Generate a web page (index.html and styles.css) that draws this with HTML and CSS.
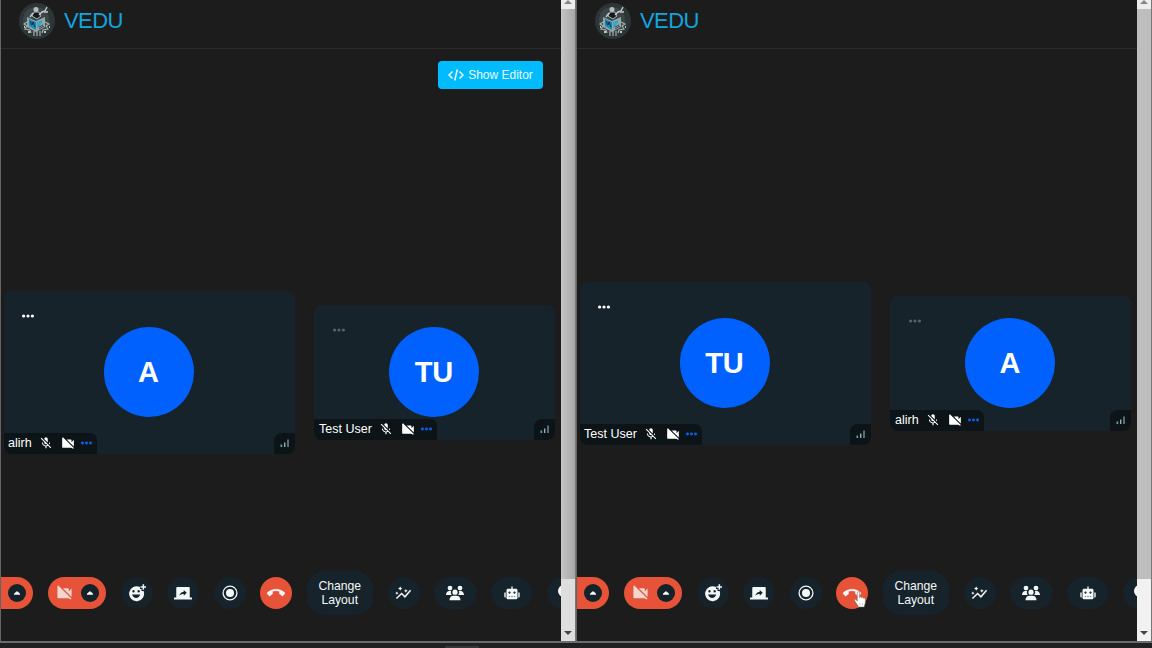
FILE: index.html
```
<!DOCTYPE html>
<html lang="en">
<head>
<meta charset="utf-8">
<title>VEDU</title>
<link rel="stylesheet" href="styles.css">
</head>
<body>
<svg class="defs" width="0" height="0">
  <symbol id="logo" viewBox="0 0 36 36">
    <circle cx="18" cy="18" r="18" fill="#2d3538"/>
    <circle cx="17" cy="17" r="13" fill="#3b4548"/>
    <path d="M8 14l9 4 9-4v10l-9 5-9-5z" fill="#98a3a5"/>
    <path d="M10 16l7 3v8l-7-4z" fill="#1688b4"/>
    <path d="M18 19l5-2v3l-5 6z" fill="#2fa9d2"/>
    <path d="M11 18l2 4 1-3 2 5" stroke="#123443" stroke-width="1" fill="none"/>
    <path d="M20 24l4-2m-4 4l5-3" stroke="#394446" stroke-width="1"/>
    <circle cx="17" cy="6.500" r="2.500" fill="#b6bec0"/>
    <path d="M13 13l2-4h5l2 4-4 3z" fill="#151a1c" stroke="#aab4b6"/>
    <path d="M20 12l3-3 3-1 2-4m-3 5l4 0M14 10l-3 4" stroke="#c0c7c8" stroke-width="1.500" fill="none"/>
    <path d="M8 19l-3 2 3 2-2 3 5 1 1 3m14-11l4 2-3 2 2 3-5 1-1 3M15 28v5m3-5v5m3-5v5" stroke="#a5b0b2" stroke-width="1.200" fill="none"/>
    <path d="M5 24h1m24 0h1M9 29h2m14 0h2" stroke="#c0c8ca" stroke-width="2"/>
  </symbol>
  <symbol id="code" viewBox="0 0 16 12">
    <path d="M4.500 2.500L1 6l3.500 3.500M11.500 2.500L15 6l-3.500 3.500M9.300.5L6.700 11.500" fill="none" stroke="currentColor" stroke-width="1.500"/>
  </symbol>
  <symbol id="dots" viewBox="0 0 12 4">
    <circle cx="1.600" cy="2" r="1.600"/><circle cx="6" cy="2" r="1.600"/><circle cx="10.400" cy="2" r="1.600"/>
  </symbol>
  <symbol id="mic-off" viewBox="0 0 24 24">
    <path d="M19 11h-1.700c0 .74-.16 1.430-.43 2.050l1.230 1.230c.56-.98.900-2.090.900-3.280zm-4.020.17c0-.06.020-.11.020-.17V5c0-1.660-1.340-3-3-3S9 3.340 9 5v.18l5.980 5.990zM4.270 3L3 4.270l6.010 6.010V11c0 1.660 1.330 3 2.990 3 .22 0 .44-.03.650-.08l1.660 1.660c-.71.330-1.500.520-2.310.520-2.760 0-5.300-2.100-5.300-5.100H5c0 3.410 2.720 6.230 6 6.720V21h2v-3.280c.91-.13 1.770-.45 2.540-.9L19.730 21 21 19.730 4.270 3z"/>
  </symbol>
  <symbol id="cam-off" viewBox="0 0 24 24">
    <path d="M22 6.500l-4 4V7c0-.55-.45-1-1-1H9.820L22 18.180V6.500zM3.270 2L2 3.270V19c0 .55.45 1 1 1h14.500L20.730 22 22 20.730 3.270 2z"/>
  </symbol>
  <symbol id="bars" viewBox="0 0 10 9">
    <path d="M.5 5.500h1.700V8H.5z" fill="#58a4b5"/><path d="M4 3.500h1.400V8H4z" fill="#8faeb5"/><path d="M7.300.5h1.400V8H7.300z" fill="#7d9298"/>
  </symbol>
  <symbol id="caret" viewBox="0 0 18 18"><path d="M6 10.700v-1L8.300 7.500h1.400L12 9.700v1z"/></symbol>
  <symbol id="emoji" viewBox="0 0 18 18">
    <path fill-rule="evenodd" d="M12 3A7.500 7.500 0 1 0 15.600 7H13.500V5H12zM5.500 6.100a1.200 1.200 0 1 1 0 2.400 1.200 1.200 0 0 1 0-2.400zm5.200 0a1.200 1.200 0 1 1 0 2.400 1.200 1.200 0 0 1 0-2.400zM4 10.500h8.300c-.6 2-2.200 3.400-4.150 3.400S4.600 12.500 4 10.500z"/>
    <path d="M14.600.3h1.500v2h2v1.500h-2v2h-1.500v-2h-2V2.300h2z"/>
  </symbol>
  <symbol id="share" viewBox="0 0 24 24">
    <path fill-rule="evenodd" d="M3 5.500C3 4.700 3.700 4 4.500 4h15c.8 0 1.500.7 1.500 1.500V18h3v2.500H0V18h3zM13 8v2.200c-3.900.5-5.400 3.200-6 5.800 1.400-1.900 3.200-2.700 6-2.700v2.200l4-3.750z"/>
  </symbol>
  <symbol id="record" viewBox="0 0 16 16">
    <circle cx="8" cy="8" r="6.900" fill="none" stroke="currentColor" stroke-width="1.300"/><circle cx="8" cy="8" r="4"/>
  </symbol>
  <symbol id="hangup" viewBox="0 0 24 24">
    <path d="M12 9c-1.600 0-3.150.25-4.600.72v3.100c0 .39-.23.740-.56.900-.98.490-1.870 1.120-2.660 1.850-.18.180-.43.280-.7.280-.28 0-.53-.11-.71-.29L.29 13.080c-.18-.17-.29-.42-.29-.7s.11-.53.290-.71C3.340 8.780 7.460 7 12 7s8.660 1.780 11.710 4.670c.18.180.29.430.29.710s-.11.530-.29.710l-2.480 2.480c-.18.180-.43.290-.71.290-.27 0-.52-.11-.7-.28-.79-.74-1.690-1.360-2.670-1.850-.33-.16-.56-.5-.56-.9v-3.100C15.150 9.250 13.600 9 12 9z" stroke="currentColor" stroke-width=".6"/>
  </symbol>
  <symbol id="stats" viewBox="0 0 18 16">
    <path d="M1.500 13.800L7 8.500l3.500 3.500 6-7" fill="none" stroke="currentColor" stroke-width="1.600"/>
    <path d="M5.500 1l.8 1.500 1.500.8-1.500.8-.8 1.500-.8-1.500-1.500-.8 1.500-.8zM11.500 3.700l.7 1.300 1.300.7-1.300.7-.7 1.300-.7-1.300-1.300-.7 1.300-.7zM2 6.500l.6 1.100 1.100.6-1.100.6L2 9.900l-.6-1.100-1.100-.6 1.100-.6z"/>
  </symbol>
  <symbol id="people" viewBox="0 0 18 15">
    <circle cx="4" cy="2.600" r="2.400"/><circle cx="14" cy="2.600" r="2.400"/>
    <path d="M0 9.500c0-2.300 1.300-4 3.200-4h1.900c-.6 1.500-.2 2.900.7 4zM18 9.500c0-2.300-1.300-4-3.200-4h-1.900c.6 1.500.2 2.900-.7 4z"/>
    <circle cx="9" cy="6.700" r="2.600"/><path d="M3.500 14.700c0-2.700 1.500-4.500 3.800-4.500h3.400c2.300 0 3.800 1.800 3.800 4.500z"/>
  </symbol>
  <symbol id="bot" viewBox="0 0 16 13">
    <path fill-rule="evenodd" d="M7.300 0h1.400v2.300H12c.9 0 1.500.6 1.500 1.500v7.400c0 .8-.6 1.500-1.500 1.500H4c-.9 0-1.500-.7-1.500-1.500V3.800c0-.9.600-1.500 1.500-1.500h3.300zM5.500 5a1.100 1.100 0 1 0 0 2.200 1.100 1.100 0 0 0 0-2.200zm5 0a1.100 1.100 0 1 0 0 2.200 1.100 1.100 0 0 0 0-2.200zM4.700 9.600v.5h1.500v-.5zm2.550 0v.5h1.500v-.5zm2.550 0v.5h1.500v-.5z"/>
    <path d="M.3 6h1.400v5H1.200C.7 11 .3 10.600.3 10zM14.300 6h1.400v4c0 .6-.4 1-.9 1h-.5z"/>
  </symbol>
  <symbol id="chat" viewBox="0 0 16 16"><circle cx="6" cy="6" r="6"/><path d="M3 9h7v5H5z"/></symbol>
</svg>

<main class="desktop">
  <section class="window">
    <div class="page">
      <header class="header"><svg class="logo"><use href="#logo"/></svg><span class="brand">VEDU</span></header>
      <div class="toolbar"><button class="editor"><svg class="code"><use href="#code"/></svg><span>Show Editor</span></button></div>
      <div class="stage">
        <article class="tile speaker">
          <svg class="menu"><use href="#dots"/></svg>
          <div class="avatar">A</div>
          <div class="footer"><div class="name"><span>alirh</span><svg class="small"><use href="#mic-off"/></svg><svg class="small"><use href="#cam-off"/></svg><svg class="more"><use href="#dots"/></svg></div><div class="signal"><svg class="bars"><use href="#bars"/></svg></div></div>
        </article>
        <article class="tile">
          <svg class="menu dim"><use href="#dots"/></svg>
          <div class="avatar">TU</div>
          <div class="footer"><div class="name"><span>Test User</span><svg class="small"><use href="#mic-off"/></svg><svg class="small"><use href="#cam-off"/></svg><svg class="more"><use href="#dots"/></svg></div><div class="signal"><svg class="bars"><use href="#bars"/></svg></div></div>
        </article>
      </div>
      <nav class="controls">
        <div class="pill first"><svg class="caret"><use href="#caret"/></svg></div>
        <div class="pill"><svg class="cam"><use href="#cam-off"/></svg><svg class="caret"><use href="#caret"/></svg></div>
        <div class="btn"><svg class="i18"><use href="#emoji"/></svg></div>
        <div class="btn"><svg class="i18"><use href="#share"/></svg></div>
        <div class="btn"><svg class="i16"><use href="#record"/></svg></div>
        <div class="btn end"><svg class="i18"><use href="#hangup"/></svg></div>
        <div class="btn layout">Change<br>Layout</div>
        <div class="btn"><svg class="i17"><use href="#stats"/></svg></div>
        <div class="btn wide"><svg class="i18"><use href="#people"/></svg></div>
        <div class="btn medium"><svg class="i16"><use href="#bot"/></svg></div>
        <div class="btn wide chat"><svg class="i16"><use href="#chat"/></svg></div>
      </nav>
    </div>
    <div class="scrollbar"><div class="arrow up"></div><div class="thumb"></div><div class="arrow down"></div></div>
  </section>

  <section class="window second">
    <div class="page">
      <header class="header"><svg class="logo"><use href="#logo"/></svg><span class="brand">VEDU</span></header>
      <div class="stage">
        <article class="tile speaker">
          <svg class="menu"><use href="#dots"/></svg>
          <div class="avatar">TU</div>
          <div class="footer"><div class="name"><span>Test User</span><svg class="small"><use href="#mic-off"/></svg><svg class="small"><use href="#cam-off"/></svg><svg class="more"><use href="#dots"/></svg></div><div class="signal"><svg class="bars"><use href="#bars"/></svg></div></div>
        </article>
        <article class="tile">
          <svg class="menu dim"><use href="#dots"/></svg>
          <div class="avatar">A</div>
          <div class="footer"><div class="name"><span>alirh</span><svg class="small"><use href="#mic-off"/></svg><svg class="small"><use href="#cam-off"/></svg><svg class="more"><use href="#dots"/></svg></div><div class="signal"><svg class="bars"><use href="#bars"/></svg></div></div>
        </article>
      </div>
      <nav class="controls">
        <div class="pill first"><svg class="caret"><use href="#caret"/></svg></div>
        <div class="pill"><svg class="cam"><use href="#cam-off"/></svg><svg class="caret"><use href="#caret"/></svg></div>
        <div class="btn"><svg class="i18"><use href="#emoji"/></svg></div>
        <div class="btn"><svg class="i18"><use href="#share"/></svg></div>
        <div class="btn"><svg class="i16"><use href="#record"/></svg></div>
        <div class="btn end"><svg class="i18"><use href="#hangup"/></svg>
          <svg class="pointer" viewBox="0 0 12 17"><path d="M3.300 10V1.800c0-1.600 2.200-1.600 2.200 0v4.700c.3-1 1.900-.9 2 .3.500-.8 1.900-.5 1.900.5.700-.5 1.900-.2 1.900.9v3.300c0 1.500-1 2.300-1 4.500H4.200c0-1.700-2-3.300-3.500-6.200-.6-1.300.9-2 1.700-.9z" fill="#fff" stroke="#665" stroke-width=".5"/><path d="M6 12v2.500M8.500 12v2.500" stroke="#999" stroke-width=".5"/></svg>
        </div>
        <div class="btn layout">Change<br>Layout</div>
        <div class="btn"><svg class="i17"><use href="#stats"/></svg></div>
        <div class="btn wide"><svg class="i18"><use href="#people"/></svg></div>
        <div class="btn medium"><svg class="i16"><use href="#bot"/></svg></div>
        <div class="btn wide chat"><svg class="i16"><use href="#chat"/></svg></div>
      </nav>
    </div>
    <div class="scrollbar"><div class="arrow up"></div><div class="thumb"></div><div class="arrow down"></div></div>
  </section>
</main>
<footer class="taskbar"><div class="task"></div></footer>
</body>
</html>
```
FILE: styles.css
```
* { box-sizing: border-box; }
body {
  margin: 0;
  width: 1152px;
  height: 648px;
  overflow: hidden;
  background: #202022;
  color: #fff;
  font-family: "Liberation Sans", Arial, sans-serif;
}
svg { display: block; flex: none; fill: currentColor; }
.defs { position: absolute; }
.desktop { display: flex; height: 643px; border-bottom: 2px solid #6b6b6b; }
.window { display: flex; width: 576px; border-left: 1px solid #656565; background: #1c1c1c; }
.page { display: flex; flex-direction: column; width: 560px; overflow: hidden; }

.header { display: flex; align-items: center; gap: 9px; height: 49px; padding: 0 0 6px 18px; border-bottom: 1px solid #2b2b2c; }
.logo { width: 36px; height: 36px; }
.brand { color: #13a5de; font-size: 22px; line-height: 24px; letter-spacing: -.6px; }

.toolbar { display: flex; justify-content: flex-end; height: 40px; padding: 12px 18px 0 0; }
.editor {
  display: flex; align-items: center; justify-content: center; gap: 4px;
  width: 105px; height: 28px; padding: 0; border: 0; border-radius: 4px;
  background: #00bcff; color: #e9faff; font: 12px "Liberation Sans", Arial, sans-serif;
  white-space: nowrap;
}
.code { width: 16px; height: 12px; }

.stage { display: flex; flex: 1; align-items: center; gap: 19px; padding: 112px 0 0 3px; }
.second .stage { padding-top: 134px; }
.tile {
  display: grid; grid-template-rows: 1fr 21px; width: 241px; height: 135px;
  flex: none; overflow: hidden; border-radius: 8px; background: #17232a;
}
.speaker { width: 291px; height: 163px; }
.tile > * { grid-column: 1; }
.menu { grid-row: 1; width: 12px; height: 4px; margin: 23px 0 0 19px; }
.speaker .menu { margin-left: 18px; }
.dim { color: #596267; }
.avatar {
  grid-row: 1 / 3; display: flex; align-items: center; justify-content: center;
  place-self: center; width: 90px; height: 90px; margin: 0 1px 1px 0; border-radius: 50%;
  background: #0061ff; font-size: 29px; font-weight: 700;
}
.speaker .avatar { margin-right: 2px; }
.footer { grid-row: 2; display: flex; justify-content: space-between; }
.name { display: flex; align-items: center; height: 21px; padding: 0 5px 1px 4px; border-radius: 0 7px 0 0; background: #0d1417; font-size: 12.500px; white-space: nowrap; }
.name span { margin-right: 7.500px; }
.tile:not(.speaker) .name { padding-left: 5px; }
.small { width: 14px; height: 14px; margin-right: 7.500px; }
.more { width: 11px; height: 4px; color: #0864ef; margin-left: -1px; }
.signal { display: flex; align-items: center; justify-content: center; width: 21px; border-radius: 8px 0 0 0; background: #0d1417; }
.bars { width: 10px; height: 9px; }

.controls { display: flex; align-items: center; gap: 14.500px; height: 97px; }
.pill { display: flex; align-items: center; justify-content: flex-end; gap: 8px; flex: none; width: 58.500px; height: 32px; padding-right: 7px; border-radius: 16px; background: #e65339; }
.first { margin-left: -26.500px; }
.cam { width: 17px; height: 17px; color: #f2d6d0; }
.caret { width: 18px; height: 18px; border-radius: 50%; background: #14222a; }
.btn { display: flex; align-items: center; justify-content: center; flex: none; width: 32px; height: 32px; border-radius: 16px; background: #17232a; color: #f3f7f8; }
.end { position: relative; background: #e65339; }
.layout { width: 66.500px; height: 44px; padding-top: 2px; border-radius: 18px; font-size: 12.200px; line-height: 13.500px; text-align: center; }
.wide { width: 42.500px; }
.medium { width: 41px; }
.chat { justify-content: flex-start; padding-left: 11px; }
.i18 { width: 18px; height: 18px; }
.i17 { width: 17px; height: 16px; }
.i16 { width: 16px; height: 16px; }
.pointer { position: absolute; left: 18px; top: 14px; width: 12px; height: 17px; }

.scrollbar { display: flex; flex-direction: column; width: 15px; border-right: 1px solid #777; background: #dedede; }
.thumb { height: 570px; background: linear-gradient(90deg, #c5c5c5, #a6a6a6); }
.second .scrollbar { background: #f1f1f1; }
.second .thumb { background: #bebebe; }
.arrow { display: flex; justify-content: center; height: 9px; }
.arrow::before { content: ""; width: 0; height: 0; border: solid transparent; border-width: 0 4px 4px; border-bottom-color: #858585; }
.up { background: #ededed; }
.down { margin-top: auto; height: 10px; }
.down::before { border-width: 4px 4px 0; border-top-color: #444; }
.taskbar { display: flex; height: 5px; padding: 3px 0 0 445px; background: #202022; }
.task { width: 34px; height: 2px; background: #363638; }
```
